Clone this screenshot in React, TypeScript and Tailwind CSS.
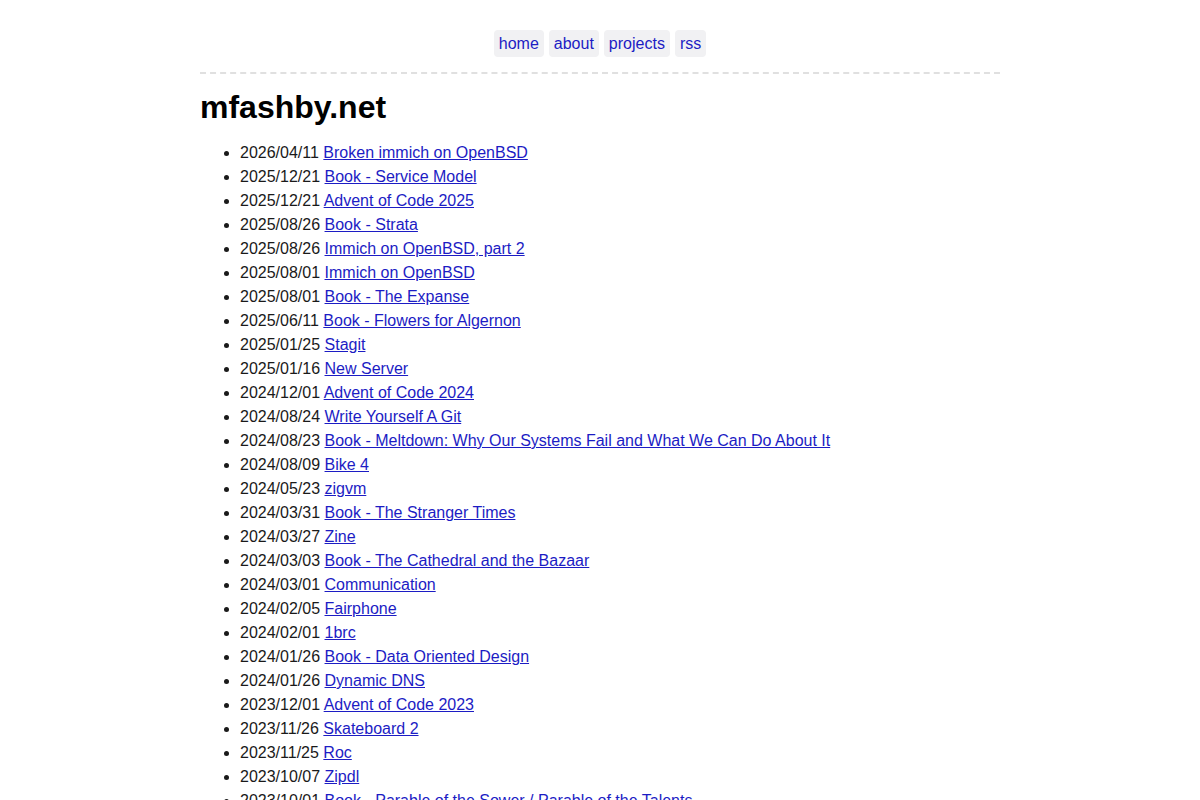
const posts: [string, string][] = [
  ["2026/04/11", "Broken immich on OpenBSD"],
  ["2025/12/21", "Book - Service Model"],
  ["2025/12/21", "Advent of Code 2025"],
  ["2025/08/26", "Book - Strata"],
  ["2025/08/26", "Immich on OpenBSD, part 2"],
  ["2025/08/01", "Immich on OpenBSD"],
  ["2025/08/01", "Book - The Expanse"],
  ["2025/06/11", "Book - Flowers for Algernon"],
  ["2025/01/25", "Stagit"],
  ["2025/01/16", "New Server"],
  ["2024/12/01", "Advent of Code 2024"],
  ["2024/08/24", "Write Yourself A Git"],
  ["2024/08/23", "Book - Meltdown: Why Our Systems Fail and What We Can Do About It"],
  ["2024/08/09", "Bike 4"],
  ["2024/05/23", "zigvm"],
  ["2024/03/31", "Book - The Stranger Times"],
  ["2024/03/27", "Zine"],
  ["2024/03/03", "Book - The Cathedral and the Bazaar"],
  ["2024/03/01", "Communication"],
  ["2024/02/05", "Fairphone"],
  ["2024/02/01", "1brc"],
  ["2024/01/26", "Book - Data Oriented Design"],
  ["2024/01/26", "Dynamic DNS"],
  ["2023/12/01", "Advent of Code 2023"],
  ["2023/11/26", "Skateboard 2"],
  ["2023/11/25", "Roc"],
  ["2023/10/07", "Zipdl"],
  ["2023/10/01", "Book - Parable of the Sower / Parable of the Talents"],
  ["2023/09/10", "Bike 3"],
  ["2023/08/20", "Home server"],
];

const nav = ["home", "about", "projects", "rss"];

export default function App() {
  return (
    <div className="min-h-screen bg-white text-[#1a1a1a] font-['Liberation_Sans',Arial,sans-serif] text-base">
      <div className="w-[800px] mx-auto">
        {/* Header nav */}
        <nav className="pt-[30px] pb-[15px] border-b-2 border-dashed border-[#e0e0e0] flex justify-center gap-[5px]">
          {nav.map((n) => (
            <a
              key={n}
              href="#"
              className="bg-[#f1f1f3] rounded-[4px] px-[5px] py-[4px] leading-[19px] text-[#1c1cc4]"
            >
              {n}
            </a>
          ))}
        </nav>

        <h1 className="mt-[15px] text-[32px] leading-[37px] font-bold text-black">mfashby.net</h1>

        <ul className="mt-[15px] pl-10 list-disc leading-6">
          {posts.map(([date, title], i) => (
            <li key={i}>
              {date}{" "}
              <a href="#" className="underline text-[#1c1cc4]">
                {title}
              </a>
            </li>
          ))}
        </ul>
      </div>
    </div>
  );
}
